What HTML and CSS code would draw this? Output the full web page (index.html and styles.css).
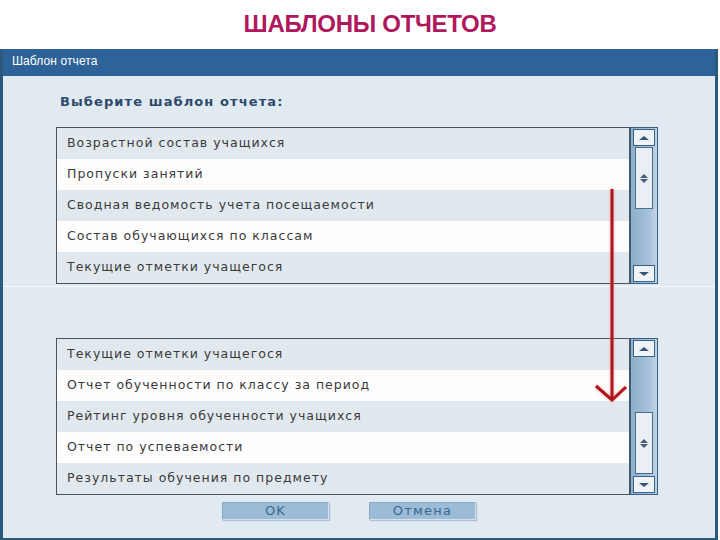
FILE: index.html
```html
<!DOCTYPE html>
<html lang="ru">
<head>
    <meta charset="UTF-8">
    <title>Шаблоны отчетов</title>
    <link rel="stylesheet" href="styles.css">
</head>
<body>
    <div class="page">
        <h1 class="page-title">ШАБЛОНЫ ОТЧЕТОВ</h1>

        <div class="dialog">
            <div class="dialog-title">Шаблон отчета</div>

            <div class="section section-top">
                <div class="prompt">Выберите шаблон отчета:</div>
                <div class="listbox">
                    <ul class="items">
                        <li>Возрастной состав учащихся</li>
                        <li>Пропуски занятий</li>
                        <li>Сводная ведомость учета посещаемости</li>
                        <li>Состав обучающихся по классам</li>
                        <li>Текущие отметки учащегося</li>
                    </ul>
                    <div class="scrollbar">
                        <div class="sb-btn sb-up"></div>
                        <div class="sb-thumb thumb-top"><span></span></div>
                        <div class="sb-btn sb-down"></div>
                    </div>
                </div>
            </div>

            <div class="section section-bottom">
                <div class="listbox">
                    <ul class="items">
                        <li>Текущие отметки учащегося</li>
                        <li>Отчет обученности по классу за период</li>
                        <li>Рейтинг уровня обученности учащихся</li>
                        <li>Отчет по успеваемости</li>
                        <li>Результаты обучения по предмету</li>
                    </ul>
                    <div class="scrollbar">
                        <div class="sb-btn sb-up"></div>
                        <div class="sb-thumb thumb-low"><span></span></div>
                        <div class="sb-btn sb-down"></div>
                    </div>
                </div>
                <div class="buttons">
                    <button class="btn">OK</button>
                    <button class="btn">Отмена</button>
                </div>
            </div>
        </div>

        <!-- red hint arrow drawn over the lists -->
        <svg class="hint-arrow" width="50" height="230" viewBox="0 0 50 230">
            <path d="M22 8 V219" stroke="#b0141c" stroke-width="3" fill="none"/>
            <path d="M6 205 L22 219 L36 206" stroke="#b0141c" stroke-width="3" fill="none" stroke-linejoin="miter"/>
        </svg>
    </div>
</body>
</html>
```

FILE: styles.css
```css
body {
    margin: 0;
    background-color: #fff;
    font-family: "DejaVu Sans", Verdana, sans-serif;
}

.page {
    position: relative;
    width: 720px;
    height: 540px;
    overflow: hidden;
}

.page-title {
    margin: 0;
    height: 49px;
    line-height: 48px;
    padding-left: 20px;
    text-align: center;
    font-family: "Liberation Sans", Arial, sans-serif;
    font-size: 24px;
    font-weight: bold;
    letter-spacing: -0.3px;
    color: #b0175c;
}

.dialog {
    width: 712px;
    background-color: #e2eaf1;
    border-left: 3px solid #2b587d;
    border-right: 3px solid #2b587d;
    border-bottom: 2px solid #2b587d;
}

.dialog-title {
    height: 27px;
    line-height: 25px;
    padding-left: 9px;
    background-color: #2e6399;
    color: #fff;
    font-family: "Liberation Sans", Arial, sans-serif;
    font-size: 12px;
    letter-spacing: 0.1px;
}

.section {
    padding-left: 53px;
}

.section-top {
    padding-top: 17px;
    padding-bottom: 2px;
    border-bottom: 1px solid #f6f9fb;
}

.section-bottom {
    padding-top: 51px;
    padding-bottom: 18px;
}

.prompt {
    height: 18px;
    line-height: 18px;
    margin-bottom: 16px;
    padding-left: 4px;
    font-size: 13px;
    font-weight: bold;
    letter-spacing: 1.1px;
    color: #2c4a6c;
}

.listbox {
    display: flex;
    width: 602px;
    height: 157px;
}

.items {
    list-style: none;
    margin: 0;
    padding: 0;
    flex: 1;
    border: 1px solid #4b545c;
}

.items li {
    height: 31px;
    line-height: 30px;
    padding-left: 10px;
    font-size: 12.5px;
    letter-spacing: 1px;
    color: #3a3a3a;
    background-color: #e1e9ef;
    white-space: nowrap;
}

.items li:nth-child(even) {
    background-color: #fdfdfd;
}

.items li:last-child {
    height: 29px;
}

.scrollbar {
    width: 22px;
    display: flex;
    flex-direction: column;
    padding: 1px 2px;
    border: 1px solid #365f84;
    background: linear-gradient(to right, #8eaeca, #a7c2da 70%, #c0d4e5);
}

.sb-btn {
    height: 15px;
    border: 1px solid #3b6184;
    background-color: #eef3f8;
    display: flex;
    justify-content: center;
    align-items: center;
}

.sb-up::before,
.sb-down::before {
    content: "";
    border-left: 5px solid transparent;
    border-right: 5px solid transparent;
}

.sb-up::before {
    border-bottom: 4px solid #3b5573;
}

.sb-down::before {
    border-top: 4px solid #3b5573;
}

.sb-down {
    margin-top: auto;
}

.sb-thumb {
    height: 60px;
    margin: 1px 2px 0;
    border: 1px solid #4a6e90;
    background-color: #e9eff5;
    display: flex;
    justify-content: center;
    align-items: center;
}

.thumb-low {
    margin-top: 55px;
}

.sb-thumb span {
    width: 8px;
    height: 9px;
    position: relative;
}

.sb-thumb span::before,
.sb-thumb span::after {
    content: "";
    position: absolute;
    left: 0;
    border-left: 4px solid transparent;
    border-right: 4px solid transparent;
}

.sb-thumb span::before {
    top: 0;
    border-bottom: 4px solid #4a5e73;
}

.sb-thumb span::after {
    bottom: 0;
    border-top: 4px solid #4a5e73;
}

.buttons {
    display: flex;
    gap: 40px;
    margin-top: 7px;
    padding-left: 166px;
}

.btn {
    width: 107px;
    height: 18px;
    padding: 0;
    border: 1px solid #d5e2ee;
    border-top-color: #8aa9c4;
    border-left-color: #8aa9c4;
    background-color: #9cbbd6;
    box-shadow: 1px 1px 1px #aebfcf;
    font-family: "DejaVu Sans", Verdana, sans-serif;
    font-size: 13px;
    letter-spacing: 1.2px;
    line-height: 16px;
    color: #3a6891;
}

.hint-arrow {
    position: absolute;
    left: 590px;
    top: 181px;
    filter: drop-shadow(0 0 1.5px rgba(240, 110, 110, 0.6));
}
```
